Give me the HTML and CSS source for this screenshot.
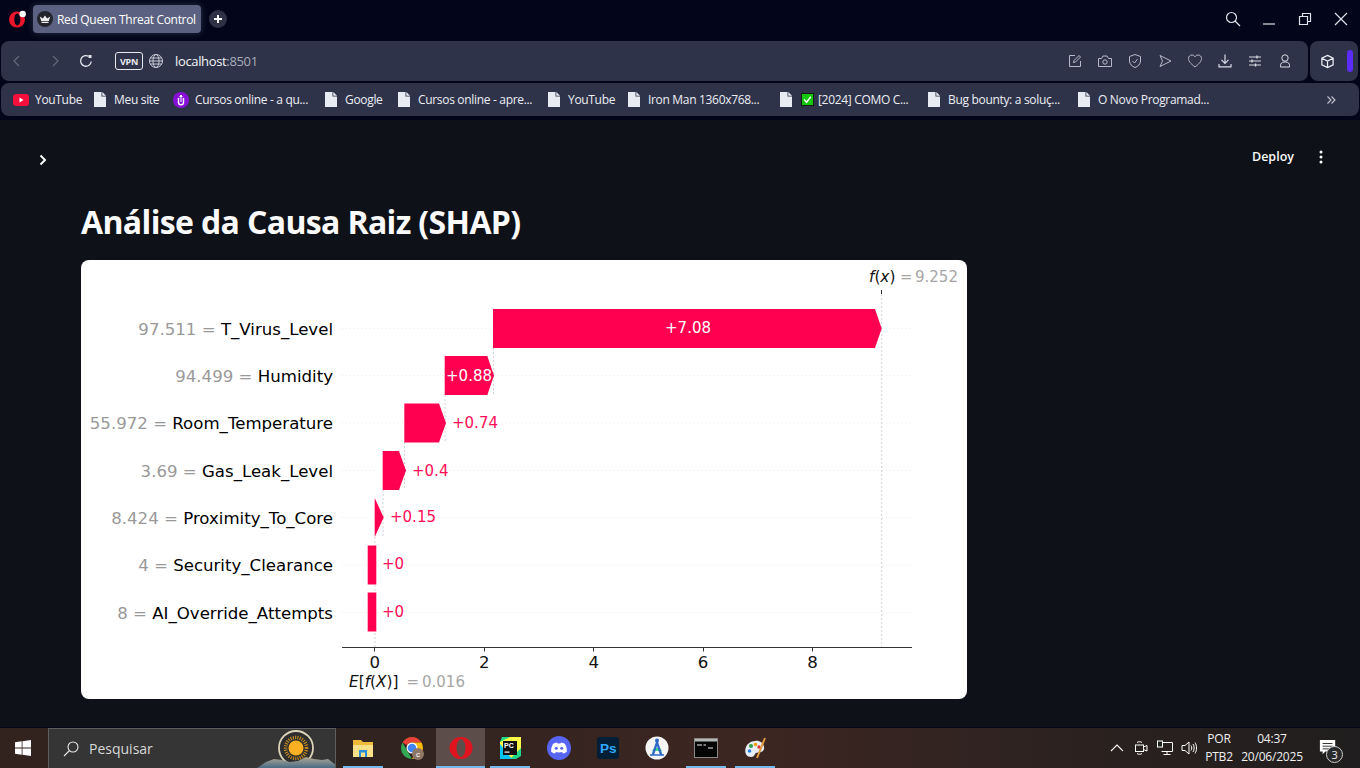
FILE: index.html
```html
<!DOCTYPE html>
<html lang="pt-BR">
<head>
<meta charset="utf-8">
<title>Red Queen Threat Control</title>
<link rel="stylesheet" href="styles.css">
</head>
<body>
<div class="page">
  <header class="tabbar">
    <svg class="opera" viewBox="0 0 18 18"><ellipse cx="8" cy="9.500" rx="8" ry="8" fill="#e8152b"/><ellipse cx="8.300" cy="9.500" rx="3" ry="6" fill="#03061a"/><circle cx="13.700" cy="4" r="3.200" fill="#fff"/></svg>
    <div class="tab">
      <svg class="favicon" viewBox="0 0 16 16"><circle cx="8" cy="8" r="8" fill="#24252c"/><path d="M2.800 5.500 5.800 7.500 8 4.500 10.200 7.500 13.200 5.500 11.800 10H4.200ZM4.500 10.800H11.500V12H4.500Z" fill="#eee"/></svg>
      <span>Red Queen Threat Control</span>
    </div>
    <div class="newtab"><svg viewBox="0 0 10 10"><path d="M5 1V9M1 5H9" stroke="#fff" stroke-width="2"/></svg></div>
    <div class="winctl">
      <svg class="ctl" viewBox="0 0 16 16"><circle cx="6.500" cy="6.500" r="5" fill="none" stroke="#dfe2e8" stroke-width="1.200"/><path d="M10 10 15 15" stroke="#dfe2e8" stroke-width="1.200"/></svg>
      <svg class="ctl" viewBox="0 0 16 16"><path d="M2 13H14" stroke="#dfe2e8" stroke-width="1.200"/></svg>
      <svg class="ctl" viewBox="0 0 16 16"><path d="M2.500 5.500H10.500V13.500H2.500ZM5.500 5.500V2.500H13.500V10.500H10.500" fill="none" stroke="#dfe2e8" stroke-width="1.200"/></svg>
      <svg class="ctl" viewBox="0 0 16 16"><path d="M2 2 14 14M14 2 2 14" stroke="#dfe2e8" stroke-width="1.200"/></svg>
    </div>
  </header>

  <div class="navrow">
    <nav class="addressbar">
      <svg class="navbtn back" viewBox="0 0 16 16"><path d="M10 3 5 8 10 13" fill="none" stroke="#626779" stroke-width="1.300"/></svg>
      <svg class="navbtn fwd" viewBox="0 0 16 16"><path d="M6 3 11 8 6 13" fill="none" stroke="#626779" stroke-width="1.300"/></svg>
      <svg class="navbtn reload" viewBox="0 0 16 16"><path d="M13.200 8.500A5.300 5.300 0 1 1 10.500 3.300" fill="none" stroke="#e4e6ec" stroke-width="1.300"/><rect x="10.500" y="2" width="3" height="3" fill="#e4e6ec"/></svg>
      <span class="vpn">VPN</span>
      <svg class="globe" viewBox="0 0 16 16"><g fill="none" stroke="#c9ccd6" stroke-width="1"><circle cx="8" cy="8" r="6.500"/><ellipse cx="8" cy="8" rx="3" ry="6.500"/><path d="M1.500 8H14.500M2.500 5H13.500M2.500 11H13.500"/></g></svg>
      <span class="url">localhost<span class="port">:8501</span></span>
      <div class="tools">
        <svg viewBox="0 0 16 16"><path d="M8 2.500H2.500V13.500H13.500V8M6.500 9.500 7 7.500 12 2.500 13.500 4 8.500 9Z" fill="none" stroke="#b6bac6"/></svg>
        <svg viewBox="0 0 16 16"><path d="M1.500 5.500H4.500L6 3H10L11.500 5.500H14.500V13.500H1.500Z" fill="none" stroke="#b6bac6"/><circle cx="8" cy="9" r="2.200" fill="none" stroke="#b6bac6"/></svg>
        <svg viewBox="0 0 16 16"><path d="M8 1.500 13.500 3.500V8C13.500 11 11 13.500 8 14.500 5 13.500 2.500 11 2.500 8V3.500ZM5.500 8 7.500 10 10.500 6" fill="none" stroke="#b6bac6"/></svg>
        <svg viewBox="0 0 16 16"><path d="M3 2.500 14 8 3 13.500 5.500 8Z" fill="none" stroke="#b6bac6"/></svg>
        <svg viewBox="0 0 16 16"><path d="M8 14C3 10 1.500 8 1.500 5.500 1.500 3.500 3 2 5 2 6.300 2 7.400 2.700 8 3.800 8.600 2.700 9.700 2 11 2 13 2 14.500 3.500 14.500 5.500 14.500 8 13 10 8 14Z" fill="none" stroke="#b6bac6"/></svg>
        <svg viewBox="0 0 16 16"><path d="M8 1.500V10M4.500 6.800 8 10.300 11.500 6.800M2 11V13.800H14V11" fill="none" stroke="#d8dbe3" stroke-width="1.200"/></svg>
        <svg viewBox="0 0 16 16"><path d="M2 4H14M2 8H14M2 12H14" stroke="#d8dbe3"/><path d="M10 2.500V5.500M5 6.500V9.500M8.500 10.500V13.500" stroke="#d8dbe3" stroke-width="1.400"/></svg>
        <svg viewBox="0 0 16 16"><circle cx="8" cy="5" r="3.200" fill="none" stroke="#d8dbe3"/><path d="M3.500 14V12.500C3.500 10.500 5 9 7 9H9C11 9 12.500 10.500 12.500 12.500V14Z" fill="none" stroke="#d8dbe3"/></svg>
      </div>
    </nav>
    <div class="sidebox">
      <svg viewBox="0 0 16 16"><path d="M8 1.500 14 4.500V11.500L8 14.500 2 11.500V4.500ZM2 4.500 8 7.500 14 4.500M8 7.500V14.500" fill="none" stroke="#eceef3" stroke-width="1.300"/></svg>
      <span class="purplebar"></span>
    </div>
  </div>

  <div class="bookmarks">
    <a class="bm"><svg class="bmicon" viewBox="0 0 16 12"><rect width="16" height="12" rx="3" fill="#f50f3c"/><path d="M6.500 3.500 10.500 6 6.500 8.500Z" fill="#fff"/></svg><span>YouTube</span></a>
    <a class="bm"><svg class="doc" viewBox="0 0 12 15"><path d="M0 0H7.500L12 4.500V15H0Z" fill="#e8ebf1"/><path d="M7.500 0V4.500H12" fill="#2f3349"/><path d="M8.300 0 12 3.700H8.300Z" fill="#e8ebf1"/></svg><span>Meu site</span></a>
    <a class="bm"><svg class="bmicon" viewBox="0 0 16 16"><circle cx="8" cy="8" r="8" fill="#8710d8"/><path d="M5.500 6V10.500C5.500 12 6.500 12.800 8 12.800 9.500 12.800 10.500 12 10.500 10.500V6" fill="none" stroke="#fff" stroke-width="1.400"/><path d="M8 3 9.200 5H6.800ZM8 6V10" stroke="#fff" fill="#fff"/></svg><span>Cursos online - a qu...</span></a>
    <a class="bm"><svg class="doc" viewBox="0 0 12 15"><path d="M0 0H7.500L12 4.500V15H0Z" fill="#e8ebf1"/><path d="M7.500 0V4.500H12" fill="#2f3349"/><path d="M8.300 0 12 3.700H8.300Z" fill="#e8ebf1"/></svg><span>Google</span></a>
    <a class="bm"><svg class="doc" viewBox="0 0 12 15"><path d="M0 0H7.500L12 4.500V15H0Z" fill="#e8ebf1"/><path d="M7.500 0V4.500H12" fill="#2f3349"/><path d="M8.300 0 12 3.700H8.300Z" fill="#e8ebf1"/></svg><span>Cursos online - apre...</span></a>
    <a class="bm"><svg class="doc" viewBox="0 0 12 15"><path d="M0 0H7.500L12 4.500V15H0Z" fill="#e8ebf1"/><path d="M7.500 0V4.500H12" fill="#2f3349"/><path d="M8.300 0 12 3.700H8.300Z" fill="#e8ebf1"/></svg><span>YouTube</span></a>
    <a class="bm"><svg class="doc" viewBox="0 0 12 15"><path d="M0 0H7.500L12 4.500V15H0Z" fill="#e8ebf1"/><path d="M7.500 0V4.500H12" fill="#2f3349"/><path d="M8.300 0 12 3.700H8.300Z" fill="#e8ebf1"/></svg><span>Iron Man 1360x768...</span></a>
    <a class="bm"><svg class="doc" viewBox="0 0 12 15"><path d="M0 0H7.500L12 4.500V15H0Z" fill="#e8ebf1"/><path d="M7.500 0V4.500H12" fill="#2f3349"/><path d="M8.300 0 12 3.700H8.300Z" fill="#e8ebf1"/></svg><svg class="check" viewBox="0 0 14 14"><rect width="14" height="14" fill="#111"/><rect x="1" y="1" width="12" height="12" fill="#16c60c"/><path d="M3.500 7 6 10 10.500 4" fill="none" stroke="#fff" stroke-width="1.500"/></svg><span>[2024] COMO C...</span></a>
    <a class="bm"><svg class="doc" viewBox="0 0 12 15"><path d="M0 0H7.500L12 4.500V15H0Z" fill="#e8ebf1"/><path d="M7.500 0V4.500H12" fill="#2f3349"/><path d="M8.300 0 12 3.700H8.300Z" fill="#e8ebf1"/></svg><span>Bug bounty: a soluç...</span></a>
    <a class="bm"><svg class="doc" viewBox="0 0 12 15"><path d="M0 0H7.500L12 4.500V15H0Z" fill="#e8ebf1"/><path d="M7.500 0V4.500H12" fill="#2f3349"/><path d="M8.300 0 12 3.700H8.300Z" fill="#e8ebf1"/></svg><span>O Novo Programad...</span></a>
    <svg class="more" viewBox="0 0 10 10"><path d="M1.500 1.500 5 5 1.500 8.500M5.500 1.500 9 5 5.500 8.500" fill="none" stroke="#c5c8d2" stroke-width="1.100"/></svg>
  </div>

  <main class="content">
    <div class="apphead">
      <svg class="expand" viewBox="0 0 12 12"><path d="M3.500 1.500 8 6 3.500 10.500" fill="none" stroke="#fafafa" stroke-width="2"/></svg>
      <span class="deploy">Deploy</span>
      <svg class="kebab" viewBox="0 0 4 14"><circle cx="2" cy="2" r="1.500" fill="#fafafa"/><circle cx="2" cy="7" r="1.500" fill="#fafafa"/><circle cx="2" cy="12" r="1.500" fill="#fafafa"/></svg>
    </div>
    <h1>Análise da Causa Raiz (SHAP)</h1>
    <div class="card">
      <svg class="chart" viewBox="81 260 886 439">
        <g class="rows">
          <path d="M342 328.500H912M342 375.500H912M342 423H912M342 470.500H912M342 517.500H912M342 565H912M342 612.500H912"/>
        </g>
        <g class="links">
          <path d="M881.700 290V647M493.500 348V395M445 395V442M404.500 442V490M383 490V537M375 537V647"/>
        </g>
        <path class="tick" d="M881.500 290V294"/>
        <g class="bar">
          <path d="M493 309H875L881.700 328.500 875 348H493Z"/>
          <path d="M444.700 356H487.300L494 375.500 487.300 395H444.700Z"/>
          <path d="M404.300 403.500H439L446 423 439 442.500H404.300Z"/>
          <path d="M382.700 451H399L406 470.500 399 490H382.700Z"/>
          <path d="M374.700 498 383.700 517.500 374.700 537Z"/>
          <path d="M367.700 545.500H376.300V584.500H367.700Z"/>
          <path d="M367.700 592.500H376.300V631.500H367.700Z"/>
        </g>
        <text class="barlabel inside" x="688" y="333">+7.08</text>
        <text class="barlabel inside" x="469" y="380.500">+0.88</text>
        <text class="barlabel" x="452" y="428">+0.74</text>
        <text class="barlabel" x="412" y="475.500">+0.4</text>
        <text class="barlabel" x="390" y="522">+0.15</text>
        <text class="barlabel" x="382" y="569">+0</text>
        <text class="barlabel" x="382" y="617">+0</text>
        <text class="feat" x="333" y="335"><tspan class="val">97.511 = </tspan>T_Virus_Level</text>
        <text class="feat" x="333" y="382"><tspan class="val">94.499 = </tspan>Humidity</text>
        <text class="feat" x="333" y="429"><tspan class="val">55.972 = </tspan>Room_Temperature</text>
        <text class="feat" x="333" y="477"><tspan class="val">3.69 = </tspan>Gas_Leak_Level</text>
        <text class="feat" x="333" y="524"><tspan class="val">8.424 = </tspan>Proximity_To_Core</text>
        <text class="feat" x="333" y="571"><tspan class="val">4 = </tspan>Security_Clearance</text>
        <text class="feat" x="333" y="618.500"><tspan class="val">8 = </tspan>AI_Override_Attempts</text>
        <path class="axis" d="M342 647.500H912M374.500 647V651.500M484.500 647V651.500M593.500 647V651.500M703.500 647V651.500M812.500 647V651.500"/>
        <text class="axislabel" x="374.700" y="668">0</text>
        <text class="axislabel" x="484.300" y="668">2</text>
        <text class="axislabel" x="593.700" y="668">4</text>
        <text class="axislabel" x="703" y="668">6</text>
        <text class="axislabel" x="812.600" y="668">8</text>
        <text class="math" x="869" y="282"><tspan class="it">f</tspan>(<tspan class="it">x</tspan>)<tspan class="mathval" x="900">=</tspan><tspan class="mathval" x="915">9.252</tspan></text>
        <text class="math" y="687" x="349"><tspan class="it">E</tspan>[<tspan class="it">f</tspan>(<tspan class="it">X</tspan>)]<tspan class="mathval" x="406.500">=</tspan><tspan class="mathval" x="422">0.016</tspan></text>
      </svg>
    </div>
  </main>

  <footer class="taskbar">
    <svg class="start" viewBox="0 0 16 16"><path d="M0 2.300 6.700 1.300V7.500H0ZM7.500 1.200 16 0V7.500H7.500ZM0 8.500H6.700V14.700L0 13.700ZM7.500 8.500H16V16L7.500 14.800Z" fill="#fff"/></svg>
    <div class="search">
      <svg class="lens" viewBox="0 0 16 16"><circle cx="10" cy="6" r="5" fill="none" stroke="#e8e8e8" stroke-width="1.100"/><path d="M6.500 9.500 1 15" stroke="#e8e8e8" stroke-width="1.100"/></svg>
      <span>Pesquisar</span>
      <svg class="sunart" viewBox="0 0 80 40">
        <defs><linearGradient id="hill" x1="0" y1="0" x2="0" y2="1"><stop offset="0" stop-color="#b6a78c"/><stop offset="0.5" stop-color="#7c8a8e"/><stop offset="1" stop-color="#4a6a82"/></linearGradient></defs>
        <circle cx="40" cy="20" r="17" fill="#2e2e2e" stroke="#dcd3b8" stroke-width="1.800"/>
        <circle cx="40" cy="20" r="10.500" fill="none" stroke="#d1921f" stroke-width="3.500" stroke-dasharray="1 1.300"/>
        <circle cx="40" cy="20" r="7.500" fill="#fdb022"/>
        <path d="M1 40 10 34 18 31 26 32 34 34 42 33 50 29 58 31 66 32 72 31 80 37V40Z" fill="url(#hill)"/>
      </svg>
    </div>
    <div class="apps">
      <div class="app open"><svg viewBox="0 0 24 24"><path d="M2 4H10L12 6H22V21H2Z" fill="#f0b93a"/><path d="M2 9H22V21H2Z" fill="#fbe08a"/><path d="M8 14H16V21H14V16.500H10V21H8Z" fill="#2a8fd8"/></svg></div>
      <div class="app"><svg viewBox="0 0 24 24"><path d="M2.500 6.500A11 11 0 0 1 21.500 6.500H12A5.500 5.500 0 0 0 7.200 9.200Z" fill="#ea4335"/><path d="M2.500 6.500 7.200 14.700 12 23A11 11 0 0 1 2.500 6.500Z" fill="#34a853"/><path d="M21.500 6.500A11 11 0 0 1 12 23L16.800 14.700 12 6.500Z" fill="#fbbc05"/><circle cx="12" cy="12" r="5.500" fill="#fff"/><circle cx="12" cy="12" r="4.300" fill="#4285f4"/><circle cx="18" cy="18" r="6" fill="#8f7768"/><text class="badge-c" x="18" y="21">c</text></svg></div>
      <div class="app active open"><svg viewBox="0 0 24 24"><ellipse cx="12" cy="12" rx="11.500" ry="11" fill="#e0141f"/><ellipse cx="12" cy="12" rx="4.500" ry="9" fill="#5c4d4a"/></svg></div>
      <div class="app open"><svg viewBox="0 0 24 24"><path d="M4 1H20L23 6V20L18 23H2V6Z" fill="#21d789"/><path d="M2 6 12 1H23V12L12 23H2Z" fill="#fcf84a"/><path d="M2 23V8L14 23Z" fill="#07c3f2"/><rect x="5" y="5" width="14" height="14" fill="#111"/><text class="badge-pc" x="6" y="12">PC</text><rect x="6.500" y="15.500" width="5" height="1.200" fill="#fff"/></svg></div>
      <div class="app"><svg viewBox="0 0 24 24"><circle cx="12" cy="12" r="12" fill="#5865f2"/><path d="M6 8C7.500 7 9 6.600 10 6.500L10.500 7.500H13.500L14 6.500C15 6.600 16.500 7 18 8 19.500 10.500 20 13 19.800 15.800 18.500 16.800 17.200 17.300 16 17.500L15 16C13 16.600 11 16.600 9 16L8 17.500C6.800 17.300 5.500 16.800 4.200 15.800 4 13 4.500 10.500 6 8Z" fill="#fff"/><circle cx="9.300" cy="12.300" r="1.500" fill="#5865f2"/><circle cx="14.700" cy="12.300" r="1.500" fill="#5865f2"/></svg></div>
      <div class="app"><svg viewBox="0 0 24 24"><rect x="1" y="1" width="22" height="22" rx="3" fill="#001e36"/><text class="badge-ps" x="4" y="17">Ps</text></svg></div>
      <div class="app"><svg viewBox="0 0 24 24"><circle cx="12" cy="12" r="11.500" fill="#f5f5f5"/><path d="M7 15A5.500 5.500 0 0 1 17 15Z" fill="#3ddc84"/><path d="M12 3 17.500 19H15L12 10 9 19H6.500Z" fill="#2c67c9"/><circle cx="12" cy="4.500" r="2" fill="#2c67c9"/><path d="M5 19H19" stroke="#2c67c9" stroke-width="1.500"/></svg></div>
      <div class="app open"><svg viewBox="0 0 24 24"><rect x="0.500" y="2.500" width="23" height="19" fill="#050505" stroke="#888"/><rect x="1" y="3" width="22" height="2.500" fill="#b8b8b8"/><path d="M3 9H8M9.500 9H12M14 12H19" stroke="#eee" stroke-width="1.200"/></svg></div>
      <div class="app open"><svg viewBox="0 0 24 24"><path d="M12 5C17 4 22 8 21 13 20 17 15 16 13 17 11 18 12 21 8 21 3 21 1 16 3 11 4 8 8 5 12 5Z" fill="#e8edf5"/><circle cx="8" cy="10" r="2" fill="#2f9e44"/><circle cx="12.500" cy="8.500" r="1.800" fill="#f59f00"/><circle cx="6.500" cy="15" r="1.800" fill="#2680eb"/><circle cx="16" cy="11" r="1.700" fill="#e03131"/><path d="M22 2 14 22" stroke="#e09a3e" stroke-width="2"/></svg></div>
    </div>
    <div class="tray">
      <svg class="trayicon" viewBox="0 0 16 16"><path d="M2 11 8 5 14 11" fill="none" stroke="#fff" stroke-width="1.100"/></svg>
      <svg class="trayicon" viewBox="0 0 16 16"><path d="M4 2.500C5 1.500 8 1.500 9 2.500M4 13.500C5 14.500 8 14.500 9 13.500" fill="none" stroke="#fff"/><rect x="2.500" y="5" width="8" height="6.500" fill="none" stroke="#fff"/><path d="M10.500 7 14 5.500V11L10.500 9.500" fill="none" stroke="#fff"/></svg>
      <svg class="trayicon" viewBox="0 0 16 16"><path d="M4.500 2.500H15.500V11.500H4.500M10 11.500V14.500M6.500 14.500H13.500" fill="none" stroke="#fff"/><rect x="0.500" y="1" width="5" height="6" fill="#222" stroke="#fff"/></svg>
      <svg class="trayicon" viewBox="0 0 16 16"><path d="M1 5.500H4L8 2V14L4 10.500H1Z" fill="none" stroke="#fff"/><path d="M10 5.500C11 7 11 9 10 10.500M12 4C13.500 6 13.500 10 12 12M14 2.500C16 5.500 16 10.500 14 13.500" fill="none" stroke="#fff"/></svg>
      <div class="ime"><span>POR</span><span>PTB2</span></div>
      <div class="clock"><span>04:37</span><span>20/06/2025</span></div>
      <div class="notif">
        <svg viewBox="0 0 20 20"><path d="M1 1H18V14H7L4 17V14H1Z" fill="#fff"/><path d="M4 5H15M4 8H15M4 11H12" stroke="#222"/></svg>
        <span class="notifcount">3</span>
      </div>
    </div>
  </footer>
</div>
</body>
</html>
```
FILE: styles.css
```css
* { box-sizing: border-box; }
html, body { margin: 0; padding: 0; }
body { background: #03061a; font-family: "Open Sans", "Liberation Sans", sans-serif; }
.page { width: 1360px; height: 768px; overflow: hidden; display: flex; flex-direction: column; background: #03061a; }

.tabbar { height: 41px; flex: none; display: flex; align-items: center; padding: 0 0 3px 9px; }
.opera { width: 18px; height: 18px; flex: none; }
.tab { margin-left: 6px; width: 168px; height: 28px; background: #5b6180; border-radius: 4px; box-shadow: 0 0 7px rgba(91, 97, 128, 0.45); display: flex; align-items: center; padding-left: 4px; gap: 4px; color: #fff; font-size: 12px; letter-spacing: -0.32px; white-space: nowrap; }
.favicon { width: 16px; height: 16px; flex: none; }
.newtab { margin-left: 8px; width: 18px; height: 18px; border-radius: 50%; background: #2f3247; display: flex; align-items: center; justify-content: center; }
.newtab svg { width: 10px; height: 10px; }
.winctl { margin-left: auto; display: flex; align-items: center; gap: 20px; padding-right: 11px; }
.ctl { width: 16px; height: 16px; }

.navrow { height: 40px; flex: none; display: flex; gap: 2px; padding: 0 2px 0 1px; }
.addressbar { flex: 1; background: #2f3349; border-radius: 8px; display: flex; align-items: center; padding-left: 8px; }
.navbtn { width: 16px; height: 16px; flex: none; }
.back { margin-right: 22px; }
.fwd { margin-right: 15px; }
.reload { margin-right: 21px; }
.vpn { width: 28px; height: 18px; border: 1px solid #e8e9ee; border-radius: 3px; color: #e8e9ee; font-size: 9px; font-weight: 700; display: flex; align-items: center; justify-content: center; letter-spacing: -0.2px; }
.globe { width: 16px; height: 16px; margin-left: 5px; flex: none; }
.url { margin-left: 11px; color: #f2f3f6; font-size: 13px; letter-spacing: -0.35px; }
.port { color: #a8acb9; }
.tools { margin-left: auto; display: flex; gap: 14px; padding-right: 15px; }
.tools svg { width: 16px; height: 16px; }
.sidebox { width: 48px; background: #2f3349; border-radius: 8px; display: flex; align-items: center; padding-left: 10px; }
.sidebox svg { width: 15px; height: 15px; }
.purplebar { margin-left: 12px; width: 6px; height: 22px; border-radius: 3px; background: #5a2cf5; }

.bookmarks { height: 33px; flex: none; margin: 2px 1px 0; background: #2f3349; border-radius: 8px; display: grid; grid-template-columns: 81px 79px 152px 73px 150px 80px 152px 148px 150px 1fr 36px; align-items: center; padding-left: 12px; color: #eceef3; font-size: 12px; letter-spacing: -0.32px; white-space: nowrap; }
.bm { display: flex; align-items: center; gap: 6px; }
.bmicon { width: 16px; height: 16px; flex: none; }
.doc { width: 12px; height: 15px; flex: none; margin-right: 2px; }
.check { width: 13px; height: 13px; flex: none; margin-left: 1px; margin-right: -2px; }
.more { grid-column: 11; width: 10px; height: 10px; margin-left: 3px; }

.content { height: 607px; flex: none; margin-top: 4px; background: #0e1117; padding: 0 81px; position: relative; }
.apphead { height: 0; }
.expand { position: absolute; left: 37px; top: 34px; width: 12px; height: 12px; }
.deploy { position: absolute; left: 1252px; top: 28px; color: #fafafa; font-size: 12.500px; font-weight: 600; }
.kebab { position: absolute; left: 1319px; top: 30px; width: 4px; height: 14px; }
h1 { margin: 0; padding-top: 79px; height: 140px; color: #fafafa; font-size: 32px; line-height: 46px; font-weight: 700; letter-spacing: -0.64px; }
.card { width: 886px; height: 439px; background: #fff; border-radius: 8px; overflow: hidden; }
.chart { display: block; width: 886px; height: 439px; }
.chart text { font-family: "DejaVu Sans", sans-serif; }
.rows path { stroke: #ececec; stroke-width: 1; stroke-dasharray: 1 3; fill: none; }
.links path { stroke: #d4d4d4; stroke-width: 1; stroke-dasharray: 2 2; fill: none; }
.tick { stroke: #333; stroke-width: 1; }
.bar path { fill: #ff0051; }
.barlabel { font-size: 15px; fill: #ff0d57; }
.barlabel.inside { fill: #fff; text-anchor: middle; }
.feat { font-size: 16.600px; fill: #000; text-anchor: end; }
.val { fill: #999; }
.axis { stroke: #333; stroke-width: 1; fill: none; }
.axislabel { font-size: 16.600px; fill: #111; text-anchor: middle; }
.math { font-size: 15.300px; fill: #111; }
.it { font-style: italic; }
.mathval { fill: #a6a6a6; font-size: 15px; }

.taskbar { height: 40px; flex: none; margin-top: 1px; display: flex; align-items: stretch; background: linear-gradient(90deg, #33231f 0%, #2f2320 25%, #33241f 35%, #3d2622 55%, #2c2220 78%, #201e1e 100%); color: #fff; }
.start { width: 16px; height: 16px; margin: 12px 17px 0 15px; flex: none; }
.search { width: 288px; flex: none; background: #353535; border: 1px solid #5e5e5e; border-bottom: 0; display: flex; align-items: center; position: relative; overflow: hidden; color: #d8d8d8; font-size: 14px; }
.lens { width: 16px; height: 16px; margin: 0 10px 0 14px; flex: none; }
.sunart { position: absolute; right: -1px; top: -1px; width: 80px; height: 40px; }
.apps { display: flex; margin-left: 2px; }
.app { width: 49px; display: flex; align-items: center; justify-content: center; position: relative; }
.app svg { width: 24px; height: 24px; }
.app.active { background: #5c4d4a; }
.app.open::after { content: ""; position: absolute; left: 5px; right: 4px; bottom: 0; height: 2px; background: #76b9ed; }
.app.active.open::after { left: 0; right: 0; }
.badge-c { font-family: "Liberation Sans", sans-serif; font-size: 8px; fill: #fff; text-anchor: middle; }
.badge-pc { font-family: "Liberation Sans", sans-serif; font-size: 7px; font-weight: 700; fill: #fff; }
.badge-ps { font-family: "Liberation Sans", sans-serif; font-size: 13.500px; font-weight: 700; fill: #31a8ff; }
.tray { margin-left: auto; display: flex; align-items: center; font-size: 12px; letter-spacing: -0.2px; color: #f0f0f0; }
.trayicon { width: 16px; height: 16px; margin-right: 8px; }
.ime { width: 36px; margin-left: -4px; display: flex; flex-direction: column; align-items: center; line-height: 18px; }
.clock { width: 70px; display: flex; flex-direction: column; align-items: center; line-height: 18px; }
.notif { width: 53px; height: 40px; position: relative; }
.notif svg { position: absolute; left: 12px; top: 11px; width: 18px; height: 18px; }
.notifcount { position: absolute; left: 19px; top: 18px; width: 17px; height: 17px; border-radius: 50%; border: 1px solid #ccc; background: #2a2a2a; font-size: 11px; display: flex; align-items: center; justify-content: center; }
```
